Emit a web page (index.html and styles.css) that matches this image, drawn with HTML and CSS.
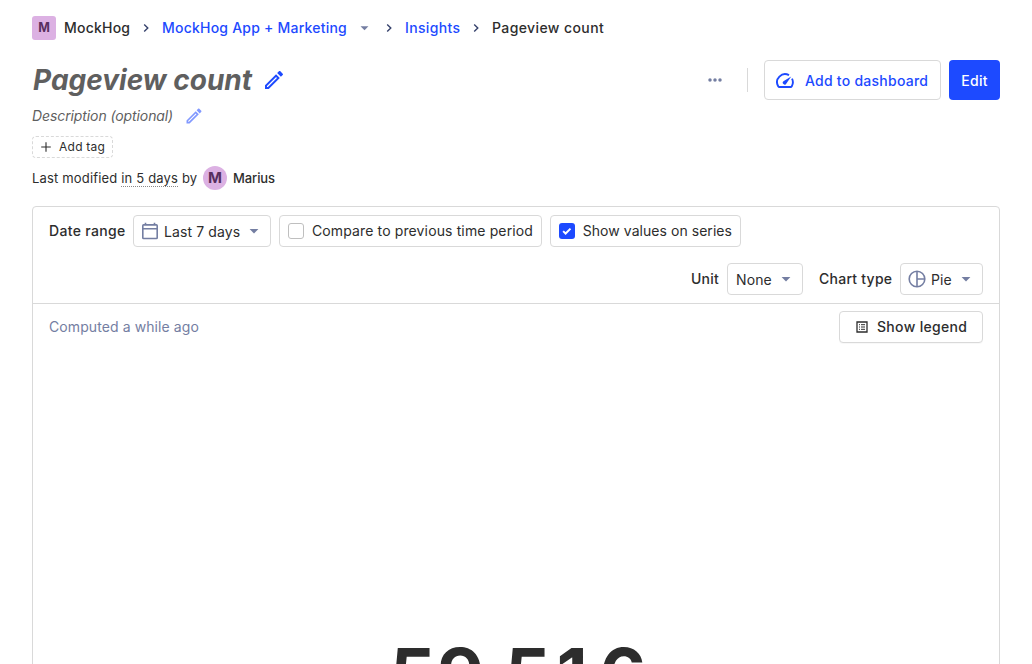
FILE: index.html
```
<!DOCTYPE html>
<html lang="en">
<head>
<meta charset="utf-8">
<title>Pageview count</title>
<link rel="stylesheet" href="styles.css">
</head>
<body>
<main class="scene">
  <nav class="breadcrumbs">
    <span class="lettermark">M</span>
    <span class="crumb crumb-project">MockHog</span>
    <svg class="chevron" viewBox="0 0 12 12"><path d="M4.2 2.4 7.8 6 4.2 9.6"/></svg>
    <a class="crumb link crumb-env">MockHog App + Marketing</a>
    <svg class="caret caret-crumb" viewBox="0 0 10 6"><path d="M.6 1h8.8L5 5.4z"/></svg>
    <svg class="chevron" viewBox="0 0 12 12"><path d="M4.2 2.4 7.8 6 4.2 9.6"/></svg>
    <a class="crumb link crumb-insights">Insights</a>
    <svg class="chevron" viewBox="0 0 12 12"><path d="M4.2 2.4 7.8 6 4.2 9.6"/></svg>
    <span class="crumb crumb-current">Pageview count</span>
  </nav>
  <header class="title-row">
    <h1 class="title">Pageview count</h1>
    <svg class="pencil pencil-title" viewBox="0 0 24 24"><path d="M14.06 9.02l.92.92L5.92 19H5v-.92l9.06-9.06M17.66 3c-.25 0-.51.1-.7.29l-1.83 1.83 3.75 3.75 1.83-1.83a.996.996 0 0 0 0-1.41l-2.34-2.34c-.2-.2-.45-.29-.71-.29zm-3.6 3.19L3 17.25V21h3.75L17.81 9.94l-3.75-3.75z"/></svg>
    <div class="actions">
      <svg class="dots" viewBox="0 0 14 4"><circle cx="2" cy="2" r="1.75"/><circle cx="7" cy="2" r="1.75"/><circle cx="12" cy="2" r="1.75"/></svg>
      <span class="divider"></span>
      <button class="button button-dashboard">
        <svg class="gauge" viewBox="0 0 18 16"><path class="arc" d="M13 2.2A8 8 0 0 0 2.2 13.2c.3.5.6.8 1.1.8h11.4c.5 0 .8-.3 1.1-.8a8 8 0 0 0 .2-7.6"/><path class="needle" d="M15.2 3.6 10.4 10.6A1.9 1.9 0 1 1 7.8 8z"/></svg>
        <span>Add to dashboard</span>
      </button>
      <button class="button button-edit">Edit</button>
    </div>
  </header>
  <div class="description">
    <span class="description-text">Description (optional)</span>
    <svg class="pencil pencil-description" viewBox="0 0 24 24"><path d="M14.06 9.02l.92.92L5.92 19H5v-.92l9.06-9.06M17.66 3c-.25 0-.51.1-.7.29l-1.83 1.83 3.75 3.75 1.83-1.83a.996.996 0 0 0 0-1.41l-2.34-2.34c-.2-.2-.45-.29-.71-.29zm-3.6 3.19L3 17.25V21h3.75L17.81 9.94l-3.75-3.75z"/></svg>
  </div>
  <div class="tag-add">
    <svg class="plus" viewBox="0 0 10 10"><path d="M5 .2v9.6M.2 5h9.6"/></svg>
    <span>Add tag</span>
  </div>
  <div class="modified">
    <span class="modified-text">Last modified <span class="time">in 5 days</span> by</span>
    <span class="avatar">M</span>
    <span class="author">Marius</span>
  </div>
  <section class="card">
    <div class="filters">
      <div class="filter-row">
        <span class="label label-date">Date range</span>
        <button class="control control-date">
          <svg class="calendar" viewBox="0 0 16 18"><path d="M1.6 2.9h12.8a.8.8 0 0 1 .8.8v12a.8.8 0 0 1-.8.8H1.6a.8.8 0 0 1-.8-.8v-12a.8.8 0 0 1 .8-.8zM.8 6.7h14.4M3.5.8v2M12.5.8v2"/></svg>
          <span class="control-text text-date">Last 7 days</span>
          <svg class="caret" viewBox="0 0 10 6"><path d="M.6 1h8.8L5 5.4z"/></svg>
        </button>
        <label class="control control-compare">
          <span class="checkbox"></span>
          <span>Compare to previous time period</span>
        </label>
        <label class="control control-values">
          <span class="checkbox checked"><svg viewBox="0 0 16 16"><path d="m4.2 8.3 2.5 2.4 5-5"/></svg></span>
          <span>Show values on series</span>
        </label>
      </div>
      <div class="filter-row filter-row-end">
        <span class="label label-unit">Unit</span>
        <button class="control control-unit">
          <span class="control-text text-unit">None</span>
          <svg class="caret" viewBox="0 0 10 6"><path d="M.6 1h8.8L5 5.4z"/></svg>
        </button>
        <span class="label label-chart">Chart type</span>
        <button class="control control-chart">
          <svg class="pie" viewBox="0 0 18 18"><circle cx="9" cy="9" r="7.8"/><path d="M9 1.2v15.6M9 9h7.8"/></svg>
          <span class="control-text text-chart">Pie</span>
          <svg class="caret" viewBox="0 0 10 6"><path d="M.6 1h8.8L5 5.4z"/></svg>
        </button>
      </div>
    </div>
    <div class="results-head">
      <span class="computed">Computed a while ago</span>
      <button class="control control-legend">
        <svg class="legend" viewBox="0 0 12 12"><path d="M1 1h10v10H1z"/><path class="lines" d="M3 3.7h1M5 3.7h4M3 6h1M5 6h4M3 8.3h1M5 8.3h4"/></svg>
        <span>Show legend</span>
      </button>
    </div>
    <div class="total">59,516</div>
  </section>
</main>
</body>
</html>
```
FILE: styles.css
```
* { box-sizing: border-box; }
html, body { height: 100%; }
body {
  margin: 0;
  overflow: hidden;
  background: #fff;
  color: #2d2d2d;
  font: 14px/20px Inter, "Liberation Sans", sans-serif;
}
svg { display: block; flex: none; }
button { font: inherit; color: inherit; }
.scene { display: flex; flex-direction: column; height: 100%; overflow: hidden; padding: 16px 32px 0; }
.scene > * { flex: none; }

.breadcrumbs { display: flex; align-items: center; height: 24px; font-weight: 500; white-space: nowrap; }
.lettermark {
  width: 24px; height: 24px; margin-right: 8px;
  border-radius: 3px; background: #dcb1e3; color: #572e5e;
  font-size: 12.5px; font-weight: 700; line-height: 24px; text-align: center;
}
.crumb { flex: none; letter-spacing: .22px; }
.crumb-project { width: 66px; }
.crumb-env { width: 185px; }
.crumb-insights { width: 55px; letter-spacing: .36px; }
.crumb-current { letter-spacing: .4px; }
.link { color: #1d4aff; }
.chevron { width: 12px; height: 12px; margin: 0 10px; fill: none; stroke: #35416b; stroke-width: 1.4; }
.caret { width: 10px; height: 6px; fill: #747ea2; }
.caret-crumb { margin: 0 9px 0 13px; width: 9px; }
.caret-crumb + .chevron { margin-left: 5px; }

.title-row { display: flex; align-items: center; height: 40px; margin-top: 20px; }
.title { margin: 0; width: 220px; padding-left: 1px; font-size: 28px; line-height: 40px; font-weight: 700; font-style: italic; color: #5f5f5f; white-space: nowrap; }
.pencil-title { width: 24px; height: 24px; margin-left: 10px; fill: #1d4aff; }
.actions { display: flex; align-items: center; margin-left: auto; }
.dots { width: 14px; height: 4px; fill: #747ea2; }
.divider { width: 1px; height: 24px; margin: 0 16px 0 25px; background: #d9d9d9; }
.button { display: flex; align-items: center; height: 40px; border-radius: 4px; font-weight: 500; white-space: nowrap; letter-spacing: .25px; }
.button-dashboard { width: 177px; padding: 1px 0 0 11px; border: 1px solid #d9d9d9; background: #fff; color: #1d4aff; }
.gauge { width: 18px; height: 16px; margin-right: 11px; }
.arc { fill: none; stroke: #1d4aff; stroke-width: 1.9; }
.needle { fill: #1d4aff; }
.button-edit { width: 51px; margin-left: 8px; padding: 1px 0 0; justify-content: center; border: 0; background: #1d4aff; color: #fff; }

.description { display: flex; align-items: center; height: 20px; margin-top: 6px; font-style: italic; color: #5f5f5f; letter-spacing: -.1px; }
.description-text { width: 142px; white-space: nowrap; }
.pencil-description { width: 20px; height: 20px; margin-left: 10px; fill: #8299ff; }
.tag-add {
  display: flex; align-items: center; gap: 8px; width: 81px; height: 22px; margin-top: 10px; padding-left: 8px;
  border: 1px dashed #d9d9d9; border-radius: 4px; font-size: 12px; letter-spacing: .25px; white-space: nowrap;
}
.plus { width: 10px; height: 10px; stroke: #2d2d2d; stroke-width: 1.1; }
.modified { display: flex; align-items: center; height: 24px; margin-top: 8px; font-size: 13px; white-space: nowrap; }
.modified-text { width: 171px; letter-spacing: .17px; }
.time { border-bottom: 1px dotted #888; }
.avatar { width: 24px; height: 24px; border-radius: 50%; background: #dcb1e3; color: #572e5e; font-size: 15px; font-weight: 700; line-height: 24px; text-align: center; }
.author { margin-left: 6px; font-weight: 500; letter-spacing: -.1px; }

.card { height: 600px; margin-top: 16px; border: 1px solid #d9d9d9; border-radius: 4px; }
.filters { display: flex; flex-direction: column; gap: 16px; height: 97px; padding: 8px 16px; border-bottom: 1px solid #d9d9d9; }
.filter-row { display: flex; align-items: center; height: 32px; white-space: nowrap; }
.filter-row-end { justify-content: flex-end; }
.label { font-weight: 500; letter-spacing: .25px; }
.label-date { width: 84px; letter-spacing: .32px; }
.label-unit { width: 36px; }
.label-chart { width: 81px; margin-left: 16px; }
.control { display: flex; align-items: center; height: 32px; padding: 0 8px; border: 1px solid #d9d9d9; border-radius: 4px; background: #fff; letter-spacing: .1px; white-space: nowrap; }
.control-date { width: 138px; margin-right: 8px; }
.control-compare { width: 263px; margin-right: 8px; letter-spacing: .13px; }
.control-values { width: 191px; letter-spacing: .05px; }
.control-unit { width: 76px; }
.control-chart { width: 83px; }
.control-text { text-align: left; padding-top: 2px; }
.text-date { width: 76px; margin: 0 9px 0 6px; }
.text-unit { width: 36px; margin-right: 9px; }
.text-chart { width: 21px; margin: 0 9px 0 5px; }
.calendar { width: 16px; height: 18px; fill: none; stroke: #747ea2; stroke-width: 1.6; }
.pie { width: 18px; height: 18px; margin-left: -1px; fill: none; stroke: #747ea2; stroke-width: 1.6; }
.checkbox { width: 16px; height: 16px; margin-right: 8px; border: 1px solid #bfbfbf; border-radius: 3px; }
.checked { border: 0; background: #1d4aff; }
.checked path { fill: none; stroke: #fff; stroke-width: 2; }

.results-head { display: flex; justify-content: space-between; align-items: center; height: 46px; padding: 0 16px; }
.computed { color: #747ea2; letter-spacing: .09px; }
.control-legend { width: 144px; padding: 0 0 0 16px; font-weight: 500; letter-spacing: .32px; box-shadow: 0 1px 1px rgba(0,0,0,.03); }
.legend { width: 12px; height: 12px; margin-right: 9px; fill: none; stroke: #2d2d2d; stroke-width: 1.3; }
.lines { stroke-width: 1; }
.total { margin-top: 274px; padding-left: 5px; font-size: 72px; line-height: 100px; font-weight: 700; font-variant-numeric: tabular-nums; letter-spacing: .8px; text-align: center; }
```
